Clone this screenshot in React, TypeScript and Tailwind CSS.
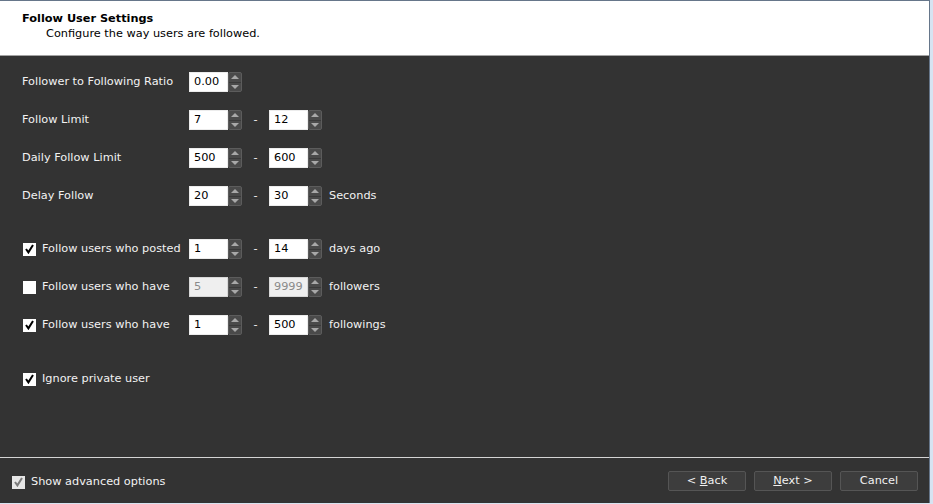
import type { ReactNode } from "react";

const FONT = { fontFamily: "'DejaVu Sans', Verdana, sans-serif" };

function Spinner() {
  return (
    <div className="flex h-[20px] w-[14px] flex-col overflow-hidden rounded-[2px] border border-[#5c5c5c] bg-[#4a4a4a]">
      <div className="flex flex-1 items-center justify-center">
        <div className="h-0 w-0 border-x-[4px] border-b-[4px] border-x-transparent border-b-[#a8a8a8]" />
      </div>
      <div className="h-px bg-[#3a3a3a]" />
      <div className="flex flex-1 items-center justify-center">
        <div className="h-0 w-0 border-x-[4px] border-t-[4px] border-x-transparent border-t-[#a8a8a8]" />
      </div>
    </div>
  );
}

function NumberBox({ value, disabled }: { value: string; disabled?: boolean }) {
  return (
    <div className="flex items-center">
      <div
        className={
          "flex h-[20px] w-[39px] items-center border pl-[4px] " +
          (disabled
            ? "border-[#d8d8d8] bg-[#efefef] text-[#8a8a8a]"
            : "border-[#ececec] bg-white text-black")
        }
      >
        {value}
      </div>
      <Spinner />
    </div>
  );
}

function Range({ from, to, unit, disabled }: { from: string; to: string; unit?: string; disabled?: boolean }) {
  return (
    <div className="flex items-center">
      <NumberBox value={from} disabled={disabled} />
      <span className="w-[27px] text-center">-</span>
      <NumberBox value={to} disabled={disabled} />
      {unit && <span className="ml-[7px]">{unit}</span>}
    </div>
  );
}

function Check({ checked, muted }: { checked: boolean; muted?: boolean }) {
  return (
    <div
      className={
        "flex h-[13px] w-[13px] items-center justify-center " +
        (muted ? "bg-[#e6e6e6]" : "bg-white")
      }
    >
      {checked && (
        <svg width="9" height="10" viewBox="0 0 9 10">
          <path
            d="M1 5 L3.4 8.4 L8 1"
            fill="none"
            stroke={muted ? "#7a7a7a" : "#000"}
            strokeWidth="2"
          />
        </svg>
      )}
    </div>
  );
}

function Row({ label, children, className = "" }: { label: ReactNode; children: ReactNode; className?: string }) {
  return (
    <div className={"flex h-[20px] items-center " + className}>
      <div className="flex w-[167px] items-center">{label}</div>
      {children}
    </div>
  );
}

function CheckLabel({ checked, text }: { checked: boolean; text: string }) {
  return (
    <div className="flex items-center">
      <div className="ml-px">
        <Check checked={checked} />
      </div>
      <span className="ml-[6px]">{text}</span>
    </div>
  );
}

function WizardButton({ children }: { children: ReactNode }) {
  return (
    <button className="flex h-[20px] w-[78px] items-center justify-center rounded-[2px] border border-[#555] bg-[#3d3d3d] text-[#f0f0f0]">
      {children}
    </button>
  );
}

export default function App() {
  return (
    <div className="h-[504px] w-[933px] bg-[#d6e3f1] text-[11.3px]" style={FONT}>
      <div className="flex h-[503px] w-[930px] flex-col border-r border-t border-[#66768a] bg-[#333]">
        <header className="h-[55px] border-b border-[#a3a3a3] bg-white pl-[22px] pt-[11px] leading-[14px] text-black">
          <div className="font-bold">Follow User Settings</div>
          <div className="pl-[24px] pt-px">Configure the way users are followed.</div>
        </header>

        <section className="flex-1 pl-[22px] pt-[16px] text-[#f2f2f2]">
          <Row label="Follower to Following Ratio">
            <NumberBox value="0.00" />
          </Row>
          <Row label="Follow Limit" className="mt-[18px]">
            <Range from="7" to="12" />
          </Row>
          <Row label="Daily Follow Limit" className="mt-[18px]">
            <Range from="500" to="600" />
          </Row>
          <Row label="Delay Follow" className="mt-[18px]">
            <Range from="20" to="30" unit="Seconds" />
          </Row>

          <Row label={<CheckLabel checked text="Follow users who posted" />} className="mt-[33px]">
            <Range from="1" to="14" unit="days ago" />
          </Row>
          <Row label={<CheckLabel checked={false} text="Follow users who have" />} className="mt-[18px]">
            <Range from="5" to="9999" unit="followers" disabled />
          </Row>
          <Row label={<CheckLabel checked text="Follow users who have" />} className="mt-[18px]">
            <Range from="1" to="500" unit="followings" />
          </Row>

          <Row label={<CheckLabel checked text="Ignore private user" />} className="mt-[34px]">
            <span />
          </Row>
        </section>

        <div className="h-px bg-[#d4d4d4]" />
        <footer className="flex h-[45px] items-start justify-between pl-[12px] pr-[11px] pt-[13px] text-[#f2f2f2]">
          <div className="mt-[3px] flex items-center">
            <Check checked muted />
            <span className="ml-[6px]">Show advanced options</span>
          </div>
          <div className="flex items-center gap-[8px]">
            <WizardButton>
              &lt;&nbsp;<span className="underline">B</span>ack
            </WizardButton>
            <WizardButton>
              <span className="underline">N</span>ext&nbsp;&gt;
            </WizardButton>
            <WizardButton>Cancel</WizardButton>
          </div>
        </footer>
      </div>
    </div>
  );
}
